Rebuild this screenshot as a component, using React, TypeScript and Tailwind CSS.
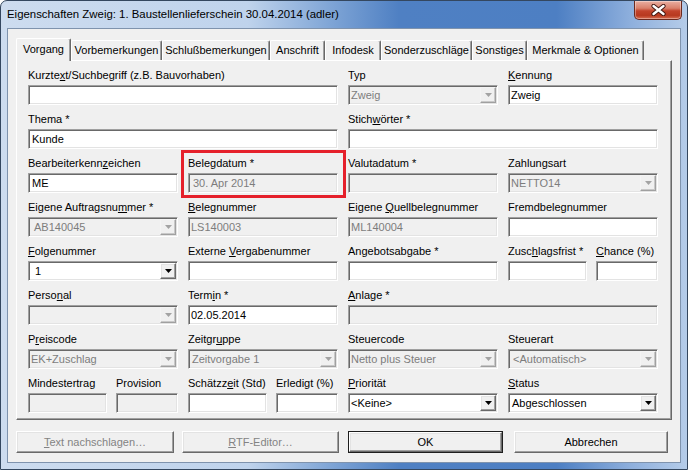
import type { ReactNode } from "react";

const FONT = "font-['Liberation_Sans',Arial,sans-serif]";

const SUNKEN =
  "border border-t-[#a0a0a0] border-l-[#a0a0a0] border-b-white border-r-white shadow-[inset_1px_1px_0_#696969,inset_-1px_-1px_0_#e3e3e3]";
const RAISED =
  "border border-t-white border-l-white border-b-[#696969] border-r-[#696969] shadow-[inset_-1px_-1px_0_#a0a0a0,inset_1px_1px_0_#e3e3e3]";

function Arrow({ disabled }: { disabled?: boolean }) {
  return (
    <svg width="7" height="4" viewBox="0 0 7 4">
      <path d="M0 0h7L3.5 4z" fill={disabled ? "#a3a3a3" : "#000"} />
    </svg>
  );
}

function ComboButton({ disabled }: { disabled?: boolean }) {
  return (
    <div
      className={`mr-[1px] flex h-[16px] w-[16px] shrink-0 items-center justify-center bg-[#f0f0f0] ${
        disabled
          ? "border border-t-[#f4f4f4] border-l-[#f4f4f4] border-b-[#a0a0a0] border-r-[#a0a0a0] shadow-[inset_-1px_-1px_0_#c8c8c8]"
          : RAISED
      }`}
    >
      <Arrow disabled={disabled} />
    </div>
  );
}

interface FieldProps {
  value?: string;
  disabled?: boolean;
  combo?: boolean;
  pad?: string;
}

function Field({ value = "", disabled, combo, pad = "pl-[3px]" }: FieldProps) {
  return (
    <div
      className={`flex h-[20px] items-center ${SUNKEN} ${
        disabled ? "bg-[#f0f0f0] text-[#7d7d7d]" : "bg-white text-black"
      }`}
    >
      <span className={`flex-1 truncate ${pad} leading-[14px]`}>{value}</span>
      {combo && <ComboButton disabled={disabled} />}
    </div>
  );
}

function Cell({ label, children, className = "" }: { label: ReactNode; children: ReactNode; className?: string }) {
  return (
    <div className={`relative flex flex-col gap-[3px] ${className}`}>
      <div className="h-[14px] whitespace-nowrap leading-[14px] text-black">{label}</div>
      {children}
    </div>
  );
}

function Pair({ children }: { children: ReactNode }) {
  return <div className="grid grid-cols-[79px_62px] gap-x-[9px]">{children}</div>;
}

const TABS = [
  { label: "Vorgang", w: "w-[55px]" },
  { label: "Vorbemerkungen", w: "w-[91px]" },
  { label: "Schlußbemerkungen", w: "w-[108px]" },
  { label: "Anschrift", w: "w-[55px]" },
  { label: "Infodesk", w: "w-[56px]" },
  { label: "Sonderzuschläge", w: "w-[91px]" },
  { label: "Sonstiges", w: "w-[55px]" },
  { label: "Merkmale & Optionen", w: "w-[117px]" },
];

function Button({
  children,
  className,
  disabled,
  isDefault,
}: {
  children: ReactNode;
  className: string;
  disabled?: boolean;
  isDefault?: boolean;
}) {
  const inner = (
    <div
      className={`flex h-full w-full items-center justify-center bg-[#f0f0f0] ${RAISED} ${
        disabled ? "text-[#838383]" : "text-black"
      }`}
    >
      {children}
    </div>
  );
  return (
    <div className={`h-[22px] ${className} ${isDefault ? "border border-[#1e1e1e]" : ""}`}>{inner}</div>
  );
}

function CloseButton() {
  return (
    <div className="mr-[5px] ml-auto flex h-[19px] w-[48px] items-center justify-center rounded-b-[5px] border border-t-0 border-[#6b2a1f] bg-[linear-gradient(180deg,#eab0a2_0%,#d9806b_40%,#c2432b_55%,#b7391f_80%,#d86e52_100%)] shadow-[inset_0_0_0_1px_rgba(255,255,255,0.35)]">
      <svg width="15" height="12" viewBox="0 0 15 12">
        <path d="M2.5 2L12.5 10M12.5 2L2.5 10" stroke="#3e1510" strokeWidth="4.2" strokeLinecap="round" />
        <path d="M2.5 2L12.5 10M12.5 2L2.5 10" stroke="#ffffff" strokeWidth="2.4" strokeLinecap="round" />
      </svg>
    </div>
  );
}

export default function App() {
  return (
    <div className={`${FONT} h-[470px] w-[688px] overflow-hidden bg-white text-[11px]`}>
      <div className="flex h-full w-full flex-col rounded-t-[7px] border border-[#34475f] bg-[linear-gradient(90deg,#cddcef_0%,#bfd3ec_36%,#7fa5d6_48%,#4f80c3_58%,#4d7fc3_81%,#8fb0dd_92%,#b5cce9_100%)]">
        {/* title bar */}
        <div className="flex h-[27px] shrink-0 items-start">
          <div className="pl-[6px] pt-[6px] text-[11.4px] leading-[15px] text-black">
            Eigenschaften Zweig: 1. Baustellenlieferschein 30.04.2014 (adler)
          </div>
          <CloseButton />
        </div>

        {/* client area */}
        <div className="mx-[6px] mb-[6px] flex flex-1 flex-col border border-[#7f93ad] bg-[#f0f0f0] px-[8px] pt-[9px]">
          {/* tabs */}
          <div className="relative z-10 -mb-[1px] flex h-[23px] items-end">
            {TABS.map((t, i) =>
              i === 0 ? (
                <div
                  key={t.label}
                  className={`${t.w} flex h-[23px] items-start justify-center rounded-t-[2px] border-t border-l border-r border-t-white border-l-white border-r-[#696969] bg-[#f0f0f0] pt-[3px] leading-[14px] shadow-[inset_-1px_0_0_#a0a0a0]`}
                >
                  {t.label}
                </div>
              ) : (
                <div
                  key={t.label}
                  className={`${t.w} mb-[1px] flex h-[20px] items-start justify-center rounded-t-[2px] border-t border-l border-r border-t-white border-l-white border-r-[#696969] bg-[#f0f0f0] pt-[2px] leading-[14px] shadow-[inset_-1px_0_0_#a0a0a0]`}
                >
                  {t.label}
                </div>
              )
            )}
          </div>

          {/* tab page */}
          <div className="relative h-[360px] border border-t-white border-l-white border-b-[#696969] border-r-[#696969] pl-[11px] pt-[7px] shadow-[inset_-1px_-1px_0_#a0a0a0]">
            <div className="flex flex-col gap-y-[7px]">
              <div className="grid grid-cols-[repeat(4,150px)] gap-x-[10px]">
                <Cell className="col-span-2" label={<>Kurzte<u>x</u>t/Suchbegriff (z.B. Bauvorhaben)</>}>
                  <Field />
                </Cell>
                <Cell label="Typ">
                  <Field value="Zweig" disabled combo pad="pl-[2px]" />
                </Cell>
                <Cell label={<><u>K</u>ennung</>}>
                  <Field value="Zweig" pad="pl-[2px]" />
                </Cell>
              </div>

              <div className="grid grid-cols-[repeat(4,150px)] gap-x-[10px]">
                <Cell className="col-span-2" label="Thema *">
                  <Field value="Kunde" />
                </Cell>
                <Cell className="col-span-2" label={<>Stich<u>w</u>örter *</>}>
                  <Field />
                </Cell>
              </div>

              <div className="grid grid-cols-[repeat(4,150px)] gap-x-[10px]">
                <Cell label={<>Bearbeiterkenn<u>z</u>eichen</>}>
                  <Field value="ME" />
                </Cell>
                <Cell label="Belegdatum *">
                  <Field value="30. Apr 2014" disabled pad="pl-[4px]" />
                  <div className="pointer-events-none absolute -top-[6px] -right-[8px] -bottom-[5px] -left-[7px] border-[3px] border-[#e5202b]" />
                </Cell>
                <Cell label="Valutadatum *">
                  <Field disabled />
                </Cell>
                <Cell label="Zahlungsart">
                  <Field value="NETTO14" disabled combo pad="pl-[2px]" />
                </Cell>
              </div>

              <div className="grid grid-cols-[repeat(4,150px)] gap-x-[10px]">
                <Cell label={<>Eigene Auftragsnu<u>m</u>mer *</>}>
                  <Field value="AB140045" disabled combo pad="pl-[5px]" />
                </Cell>
                <Cell label={<><u>B</u>elegnummer</>}>
                  <Field value="LS140003" disabled pad="pl-[2px]" />
                </Cell>
                <Cell label={<>Eigene <u>Q</u>uellbelegnummer</>}>
                  <Field value="ML140004" disabled pad="pl-[2px]" />
                </Cell>
                <Cell label="Fremdbelegnummer">
                  <Field />
                </Cell>
              </div>

              <div className="grid grid-cols-[repeat(4,150px)] gap-x-[10px]">
                <Cell label={<><u>F</u>olgenummer</>}>
                  <Field value="1" combo pad="pl-[6px]" />
                </Cell>
                <Cell label={<>Externe <u>V</u>ergabenummer</>}>
                  <Field />
                </Cell>
                <Cell label="Angebotsabgabe *">
                  <Field />
                </Cell>
                <Pair>
                  <Cell label={<>Zusc<u>h</u>lagsfrist *</>}>
                    <Field />
                  </Cell>
                  <Cell label={<><u>C</u>hance (%)</>}>
                    <Field />
                  </Cell>
                </Pair>
              </div>

              <div className="grid grid-cols-[repeat(4,150px)] gap-x-[10px]">
                <Cell label={<>Perso<u>n</u>al</>}>
                  <Field disabled combo />
                </Cell>
                <Cell label={<>Term<u>i</u>n *</>}>
                  <Field value="02.05.2014" pad="pl-[2px]" />
                </Cell>
                <Cell className="col-span-2" label={<><u>A</u>nlage *</>}>
                  <Field disabled />
                </Cell>
              </div>

              <div className="grid grid-cols-[repeat(4,150px)] gap-x-[10px]">
                <Cell label={<>P<u>r</u>eiscode</>}>
                  <Field value="EK+Zuschlag" disabled combo pad="pl-[2px]" />
                </Cell>
                <Cell label={<>Zeitgr<u>u</u>ppe</>}>
                  <Field value="Zeitvorgabe 1" disabled combo pad="pl-[3px]" />
                </Cell>
                <Cell label="Steuercode">
                  <Field value="Netto plus Steuer" disabled combo pad="pl-[2px]" />
                </Cell>
                <Cell label="Steuerart">
                  <Field value="<Automatisch>" disabled combo pad="pl-[4px]" />
                </Cell>
              </div>

              <div className="grid grid-cols-[repeat(4,150px)] gap-x-[10px]">
                <Pair>
                  <Cell label="Mindestertrag">
                    <Field disabled />
                  </Cell>
                  <Cell label="Provision">
                    <Field disabled />
                  </Cell>
                </Pair>
                <Pair>
                  <Cell label={<>Schätzz<u>e</u>it (Std)</>}>
                    <Field />
                  </Cell>
                  <Cell label="Erledigt (%)">
                    <Field />
                  </Cell>
                </Pair>
                <Cell label={<><u>P</u>riorität</>}>
                  <Field value="<Keine>" combo pad="pl-[2px]" />
                </Cell>
                <Cell label={<><u>S</u>tatus</>}>
                  <Field value="Abgeschlossen" combo pad="pl-[3px]" />
                </Cell>
              </div>
            </div>
          </div>

          {/* dialog buttons */}
          <div className="mt-[11px] flex">
            <Button className="w-[158px]" disabled>
              <span>
                <u>T</u>ext nachschlagen…
              </span>
            </Button>
            <Button className="ml-[8px] w-[157px]" disabled>
              <span>
                <u>R</u>TF-Editor…
              </span>
            </Button>
            <Button className="ml-[9px] w-[155px]" isDefault>
              OK
            </Button>
            <Button className="ml-[11px] w-[154px]">Abbrechen</Button>
          </div>
        </div>
      </div>
    </div>
  );
}
